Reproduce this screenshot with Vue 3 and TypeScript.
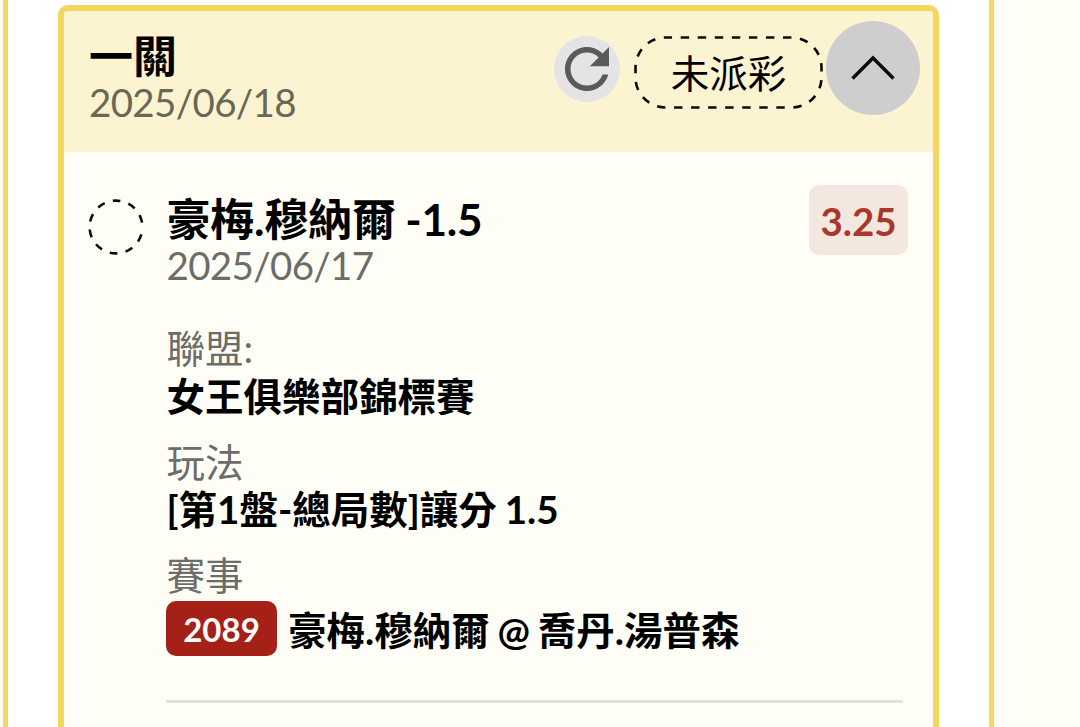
<script setup lang="ts">
interface Detail {
  label: string
  value: string
  code?: string
}

const bet = {
  title: '一關',
  date: '2025/06/18',
  status: '未派彩',
  pick: '豪梅.穆納爾 -1.5',
  pickDate: '2025/06/17',
  odds: '3.25',
}

const details: Detail[] = [
  { label: '聯盟:', value: '女王俱樂部錦標賽' },
  { label: '玩法', value: '[第1盤-總局數]讓分 1.5' },
  { label: '賽事', value: '豪梅.穆納爾 @ 喬丹.湯普森', code: '2089' },
]
</script>

<template>
  <div class="page">
    <main class="panel">
      <article class="card">
        <header class="head">
          <div class="head-text">
            <h1 class="title">{{ bet.title }}</h1>
            <p class="date">{{ bet.date }}</p>
          </div>
          <button class="refresh" aria-label="refresh">
            <svg width="66" height="66" viewBox="0 0 24 24">
              <path d="M17.65 6.35C16.2 4.9 14.21 4 12 4c-4.42 0-7.99 3.58-7.99 8s3.57 8 7.99 8c3.73 0 6.84-2.55 7.73-6h-2.08c-.82 2.33-3.04 4-5.65 4-3.31 0-6-2.69-6-6s2.69-6 6-6c1.66 0 3.14.69 4.22 1.78L13 11h7V4l-2.35 2.35z" fill="#5a5a5a" />
            </svg>
          </button>
          <div class="status">
            <svg class="outline" width="189" height="73" viewBox="0 0 189 73">
              <rect x="1.5" y="1.5" width="186" height="70" rx="30" fill="none" stroke="#0a0a0a" stroke-width="2.6" stroke-dasharray="8.4 8.65" stroke-dashoffset="-15.2" />
            </svg>
            <span>{{ bet.status }}</span>
          </div>
          <button class="toggle" aria-label="collapse">
            <svg width="94" height="94" viewBox="0 0 94 94">
              <path d="M26.5 57.5L47 37L67.5 57.5" fill="none" stroke="#0a0a0a" stroke-width="3.4" />
            </svg>
          </button>
        </header>
        <section class="body">
          <svg class="ring" width="56" height="56" viewBox="0 0 56 56">
            <circle cx="28" cy="28" r="26.4" fill="none" stroke="#0a0a0a" stroke-width="2.6" stroke-dasharray="7.8 8.3" stroke-dashoffset="-7.6" />
          </svg>
          <div class="content">
            <div class="top">
              <div>
                <h2 class="pick">{{ bet.pick }}</h2>
                <p class="date">{{ bet.pickDate }}</p>
              </div>
              <span class="odds">{{ bet.odds }}</span>
            </div>
            <dl class="details">
              <div v-for="d in details" :key="d.label" class="detail">
                <dt>{{ d.label }}</dt>
                <dd :class="{ coded: d.code }"><span v-if="d.code" class="code">{{ d.code }}</span><span class="value">{{ d.value }}</span></dd>
              </div>
            </dl>
          </div>
        </section>
      </article>
    </main>
  </div>
</template>

<style>
body {
  margin: 0;
  overflow: hidden;
}
</style>

<style scoped>
.page {
  box-sizing: border-box;
  width: 1080px;
  height: 727px;
  padding-left: 3px;
  overflow: hidden;
  background: #fffef6;
  color: #000;
  font-family: Lato, "Noto Sans CJK TC", sans-serif;
}
.panel {
  box-sizing: border-box;
  width: 991px;
  height: 727px;
  padding: 5px 50px 0;
  border: solid #f2d964;
  border-width: 0 5px;
  background: #fff;
}
.card {
  box-sizing: border-box;
  width: 881px;
  height: 760px;
  border: 6px solid #f2d75c;
  border-radius: 10px;
  overflow: hidden;
  background: #fffef6;
}
.head {
  box-sizing: border-box;
  display: flex;
  height: 141px;
  padding: 10px 13px 0 25px;
  background: #fcf3d0;
}
.head-text {
  flex: 1;
  padding-top: 12px;
}
h1, h2, p, dl, dd, dt {
  margin: 0;
}
.title, .pick {
  font-size: 44px;
  line-height: 46px;
  font-weight: 700;
  white-space: nowrap;
}
.pick {
  letter-spacing: -0.2px;
  word-spacing: -1px;
}
.date {
  font-size: 38.5px;
  line-height: 46px;
  letter-spacing: -0.65px;
  color: #6b6757;
}
.refresh, .toggle {
  padding: 0;
  border: 0;
  border-radius: 50%;
}
.refresh {
  width: 66px;
  height: 66px;
  margin: 15px 14px 0 0;
  background: #e4e4e6;
}
.refresh svg, .toggle svg {
  display: block;
}
.status {
  position: relative;
  width: 189px;
  height: 73px;
  margin: 15px 3px 0 0;
  font-size: 38.5px;
  line-height: 75px;
  text-align: center;
}
.outline {
  position: absolute;
  inset: 0;
}
.toggle {
  width: 94px;
  height: 94px;
  background: #cecece;
}
.body {
  display: flex;
  gap: 22.5px;
  padding: 44px 25px 0 24px;
}
.ring {
  flex: none;
  margin-top: 3px;
}
.content {
  flex: 1;
}
.top {
  display: flex;
  justify-content: space-between;
}
.body .date {
  color: #6c6c69;
}
.odds {
  box-sizing: border-box;
  width: 99px;
  height: 70px;
  margin-top: -11px;
  border-radius: 10px;
  background: #f4e7e0;
  color: #a8382b;
  font-size: 38.5px;
  line-height: 72px;
  font-weight: 700;
  text-align: center;
}
.details {
  box-sizing: border-box;
  width: 737px;
  height: 378px;
  margin: 37px 0 0 -0.5px;
  border-bottom: 3px solid #e2e1dc;
}
.detail {
  height: 113.5px;
  font-size: 38.5px;
  white-space: nowrap;
}
dt {
  height: 47px;
  padding-left: 0.5px;
  line-height: 47px;
  color: #6c6c69;
}
dd {
  display: flex;
  min-height: 48px;
  align-items: center;
  padding-left: 0.5px;
  font-weight: 700;
  line-height: 45px;
  word-spacing: -1.5px;
}
.coded {
  padding: 2px 0 0;
}
.coded .value {
  padding-top: 3px;
}
.code {
  flex: none;
  width: 111px;
  height: 55px;
  margin-right: 11px;
  border-radius: 10px;
  background: #a52117;
  color: #fff;
  font-size: 33px;
  line-height: 56px;
  text-align: center;
}
</style>
